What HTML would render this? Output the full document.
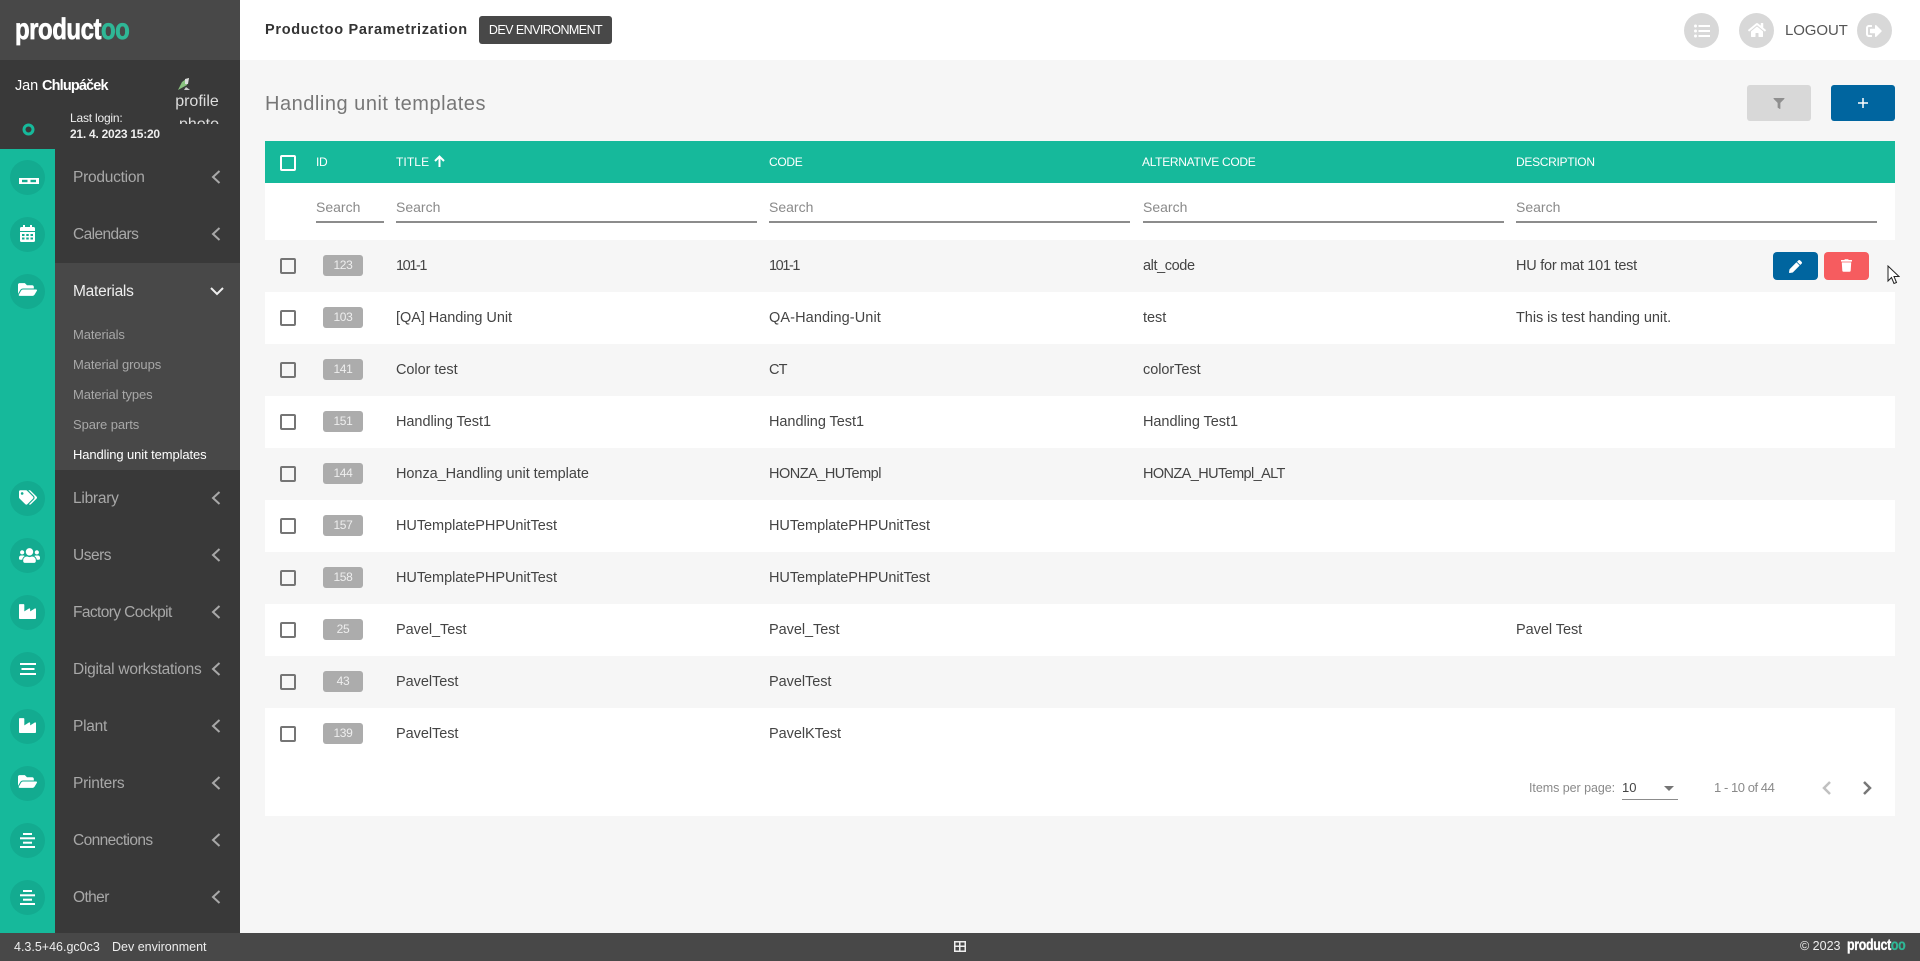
<!DOCTYPE html>
<html lang="en">
<head>
<meta charset="utf-8">
<title>Handling unit templates</title>
<style>
html,body{margin:0;padding:0;width:1920px;height:961px;overflow:hidden;background:#f6f6f6;font-family:"Liberation Sans",sans-serif;color:#444}
.a{position:absolute;box-sizing:border-box}
.t{position:absolute;white-space:nowrap;line-height:20px;height:20px}
.m{font-size:15.5px;color:#a8a8a8;left:73px;letter-spacing:-.25px;margin-top:1px}
.s{font-size:13px;color:#a8a8a8;left:73px;letter-spacing:-.1px;margin-top:1px}
.h{font-size:12px;color:#fff;top:152px;letter-spacing:-.3px}
.q{font-size:14px;color:#8a8a8a;top:197px}
.d{font-size:14.5px;color:#444;letter-spacing:-.05px;margin-top:1px}
.n1{letter-spacing:-1.4px}
.n2{letter-spacing:-.5px}
.u{position:absolute;height:1.5px;background:#8c8c8c;top:221px}
.c{position:absolute;left:280px;width:16px;height:16px;border:2px solid #757575;border-radius:2px;box-sizing:border-box}
.b{position:absolute;left:323px;width:40px;height:21px;background:#acacac;border-radius:3px;color:#eee;font-size:12px;letter-spacing:-.3px;line-height:21px;text-align:center}
.o{position:absolute;left:10px;width:35px;height:35px;border-radius:50%;background:#13ab90}
.o svg{position:absolute;fill:#fff}
.r{position:absolute;width:35px;height:35px;border-radius:50%;background:#d8d8d8;top:13px}
.r svg{position:absolute;fill:#fff}
.row{position:absolute;left:265px;width:1630px;height:52px}
svg.ch{position:absolute;left:211px;fill:none;stroke:#a8a8a8;stroke-width:2}
.logo{transform-origin:0 50%;font-weight:bold;color:#fff}
.logo span{color:#2fb796}
</style>
</head>
<body>
<svg width="0" height="0" style="position:absolute">
<defs>
<symbol id="folder" viewBox="0 0 576 512"><path d="M572.694 292.093L500.27 416.248A63.997 63.997 0 0 1 444.989 448H45.025c-18.523 0-30.064-20.093-20.731-36.093l72.424-124.155A64 64 0 0 1 152 256h399.964c18.523 0 30.064 20.093 20.73 36.093zM152 224h328v-48c0-26.51-21.49-48-48-48H272l-64-64H48C21.49 64 0 85.49 0 112v278.046l69.077-118.418C86.214 242.25 117.989 224 152 224z"/></symbol>
<symbol id="industry" viewBox="0 0 512 512"><path d="M475.115 163.781L336 252.309v-68.28c0-18.916-20.931-30.399-36.885-20.248L160 252.309V56c0-13.255-10.745-24-24-24H24C10.745 32 0 42.745 0 56v400c0 13.255 10.745 24 24 24h464c13.255 0 24-10.745 24-24V184.029c0-18.917-20.931-30.399-36.885-20.248z"/></symbol>
<symbol id="users" viewBox="0 0 640 512"><path d="M96 224c35.3 0 64-28.7 64-64s-28.7-64-64-64-64 28.7-64 64 28.7 64 64 64zm448 0c35.3 0 64-28.7 64-64s-28.7-64-64-64-64 28.7-64 64 28.7 64 64 64zm32 32h-64c-17.6 0-33.5 7.1-45.1 18.6 40.3 22.1 68.9 62 75.1 109.4h66c17.7 0 32-14.3 32-32v-32c0-35.3-28.7-64-64-64zm-256 0c61.9 0 112-50.1 112-112S381.9 32 320 32 208 82.1 208 144s50.1 112 112 112zm76.8 32h-8.3c-20.8 10-43.9 16-68.5 16s-47.6-6-68.5-16h-8.3C179.6 288 128 339.6 128 403.2V432c0 26.5 21.5 48 48 48h288c26.5 0 48-21.5 48-48v-28.8c0-63.6-51.6-115.2-115.2-115.2zm-223.7-13.4C161.5 263.1 145.6 256 128 256H64c-35.3 0-64 28.7-64 64v32c0 17.7 14.3 32 32 32h65.9c6.3-47.4 34.9-87.3 75.2-109.4z"/></symbol>
<symbol id="tags" viewBox="0 0 640 512"><path d="M497.941 225.941L286.059 14.059A48 48 0 0 0 252.118 0H48C21.49 0 0 21.49 0 48v204.118a48 48 0 0 0 14.059 33.941l211.882 211.882c18.744 18.745 49.136 18.746 67.882 0l204.118-204.118c18.745-18.745 18.745-49.137 0-67.882zM112 160c-26.51 0-48-21.49-48-48s21.49-48 48-48 48 21.49 48 48-21.49 48-48 48zm513.941 133.823L421.823 497.941c-18.745 18.745-49.137 18.745-67.882 0l-.36-.36L527.64 323.522c16.999-16.999 26.36-39.6 26.36-63.64s-9.362-46.641-26.36-63.64L331.397 0h48.721a48 48 0 0 1 33.941 14.059l211.882 211.882c18.745 18.745 18.745 49.137 0 67.882z"/></symbol>
<symbol id="alignc" viewBox="0 0 15 15"><rect x="3" y="0" width="9" height="2"/><rect x="0" y="4.300" width="15" height="2"/><rect x="3" y="8.700" width="9" height="2"/><rect x="0" y="13" width="15" height="2"/></symbol>
<symbol id="bars" viewBox="0 0 16 12"><rect x="0" y="0" width="16" height="2"/><rect x="1.500" y="5" width="13" height="2"/><rect x="0" y="10" width="16" height="2"/></symbol>
<symbol id="chl" viewBox="0 0 10 14"><path d="M8.500 1L2 7l6.500 6"/></symbol>
</defs>
</svg>

<!-- Header -->
<div class="a" style="left:240px;top:0;width:1680px;height:60px;background:#fff"></div>
<div class="t" style="left:265px;top:20px;font-size:14.5px;font-weight:bold;color:#333;letter-spacing:.7px">Productoo Parametrization</div>
<div class="a" style="left:479px;top:16px;width:133px;height:28px;background:#484848;border-radius:3px;color:#fff;font-size:12.5px;line-height:28px;text-align:center;letter-spacing:-.55px">DEV ENVIRONMENT</div>

<div class="r" style="left:1684px"><svg style="left:10px;top:10.500px" width="16" height="14" viewBox="0 0 16 14"><circle cx="1.500" cy="2" r="1.500"/><circle cx="1.500" cy="7" r="1.500"/><circle cx="1.500" cy="12" r="1.500"/><rect x="4.500" y="1" width="11.500" height="2"/><rect x="4.500" y="6" width="11.500" height="2"/><rect x="4.500" y="11" width="11.500" height="2"/></svg></div>
<div class="r" style="left:1739px"><svg style="left:8.500px;top:9px" width="18" height="16" viewBox="0 0 576 512"><path d="M280.37 148.26L96 300.11V464a16 16 0 0 0 16 16l112.06-.29a16 16 0 0 0 15.92-16V368a16 16 0 0 1 16-16h64a16 16 0 0 1 16 16v95.64a16 16 0 0 0 16 16.05L464 480a16 16 0 0 0 16-16V300L295.67 148.26a12.19 12.19 0 0 0-15.3 0zM571.6 251.47L488 182.56V44.05a12 12 0 0 0-12-12h-56a12 12 0 0 0-12 12v72.61L318.47 43a48 48 0 0 0-61 0L4.34 251.47a12 12 0 0 0-1.6 16.9l25.5 31A12 12 0 0 0 45.15 301l235.22-193.74a12.19 12.19 0 0 1 15.3 0L530.9 301a12 12 0 0 0 16.9-1.6l25.5-31a12 12 0 0 0-1.7-16.93z"/></svg></div>
<div class="t" style="left:1785px;top:21px;font-size:15px;color:#555;letter-spacing:-.1px">LOGOUT</div>
<div class="r" style="left:1857px"><svg style="left:9px;top:9.500px" width="16" height="16" viewBox="0 0 512 512"><path d="M497 273L329 441c-15 15-41 4.500-41-17v-96H152c-13.300 0-24-10.700-24-24v-96c0-13.300 10.700-24 24-24h136V88c0-21.400 25.900-32 41-17l168 168c9.300 9.400 9.300 24.600 0 34zM192 436v-40c0-6.600-5.400-12-12-12H96c-17.700 0-32-14.300-32-32V160c0-17.700 14.300-32 32-32h84c6.600 0 12-5.400 12-12V76c0-6.600-5.400-12-12-12H96c-53 0-96 43-96 96v192c0 53 43 96 96 96h84c6.600 0 12-5.400 12-12z"/></svg></div>

<!-- Page title & buttons -->
<div class="t" style="left:265px;top:94px;font-size:20px;color:#777;letter-spacing:.52px">Handling unit templates</div>
<div class="a" style="left:1747px;top:85px;width:64px;height:36px;background:#d8d8d8;border-radius:3px"><svg style="position:absolute;left:26px;top:13px;fill:#8f8f8f" width="12" height="11" viewBox="0 0 512 512"><path d="M487.976 0H24.028C2.710 0-8.047 25.866 7.058 40.971L192 225.941V432c0 7.831 3.821 15.170 10.237 19.662l80 55.980C298.020 518.690 320 507.493 320 487.980V225.941l184.947-184.970C520.021 25.896 509.338 0 487.976 0z"/></svg></div>
<div class="a" style="left:1831px;top:85px;width:64px;height:36px;background:#00659f;border-radius:3px"><svg style="position:absolute;left:27px;top:13px;fill:#fff" width="10" height="10" viewBox="0 0 10 10"><rect x="4.250" y="0" width="1.500" height="10"/><rect x="0" y="4.250" width="10" height="1.500"/></svg></div>

<!-- Table header -->
<div class="a" style="left:265px;top:141px;width:1630px;height:42px;background:#16b99b"></div>
<div class="c" style="top:155px;border-color:#fff"></div>
<div class="t h" style="left:316px">ID</div>
<div class="t h" style="left:396px;letter-spacing:.1px">TITLE</div>
<svg style="position:absolute;left:434px;top:155px;fill:none;stroke:#fff;stroke-width:2" width="11" height="12" viewBox="0 0 11 12"><path d="M5.500 12V1.500M1 6l4.500-4.500L10 6"/></svg>
<div class="t h" style="left:769px">CODE</div>
<div class="t h" style="left:1142px">ALTERNATIVE CODE</div>
<div class="t h" style="left:1516px">DESCRIPTION</div>

<!-- Search row -->
<div class="a" style="left:265px;top:183px;width:1630px;height:57px;background:#fff"></div>
<div class="t q" style="left:316px">Search</div><div class="u" style="left:316px;width:68px"></div>
<div class="t q" style="left:396px">Search</div><div class="u" style="left:396px;width:361px"></div>
<div class="t q" style="left:769px">Search</div><div class="u" style="left:769px;width:361px"></div>
<div class="t q" style="left:1143px">Search</div><div class="u" style="left:1143px;width:361px"></div>
<div class="t q" style="left:1516px">Search</div><div class="u" style="left:1516px;width:361px"></div>

<!-- Rows -->
<div class="row" style="top:292px;background:#fff"></div>
<div class="row" style="top:396px;background:#fff"></div>
<div class="row" style="top:500px;background:#fff"></div>
<div class="row" style="top:604px;background:#fff"></div>
<div class="row" style="top:708px;background:#fff;height:108px"></div>

<div class="c" style="top:258px"></div><div class="b" style="top:255px">123</div>
<div class="t d n1" style="left:396px;top:255px">101-1</div><div class="t d n1" style="left:769px;top:255px">101-1</div><div class="t d" style="left:1143px;top:255px;letter-spacing:-.4px">alt_code</div><div class="t d" style="left:1516px;top:255px;letter-spacing:-.25px">HU for mat 101 test</div>
<div class="a" style="left:1773px;top:252px;width:45px;height:28px;background:#00659f;border-radius:4px"><svg style="position:absolute;left:16px;top:8px;fill:#fff" width="13" height="13" viewBox="0 0 512 512"><path d="M497.900 142.100l-46.100 46.100c-4.700 4.700-12.300 4.700-17 0l-111-111c-4.700-4.700-4.700-12.300 0-17l46.100-46.100c18.700-18.700 49.100-18.700 67.900 0l60.100 60.100c18.800 18.700 18.800 49.100 0 67.900zM284.200 99.800L21.600 362.400.4 483.900c-2.900 16.400 11.400 30.600 27.800 27.800l121.500-21.300 262.600-262.600c4.700-4.700 4.700-12.300 0-17l-111-111c-4.800-4.700-12.400-4.700-17.100 0z"/></svg></div>
<div class="a" style="left:1824px;top:252px;width:45px;height:28px;background:#f65c5f;border-radius:4px"><svg style="position:absolute;left:17px;top:7px;fill:#fff" width="11" height="13" viewBox="0 0 448 512"><path d="M432 32H312l-9.400-18.700A24 24 0 0 0 281.100 0H166.800a23.720 23.720 0 0 0-21.400 13.300L136 32H16A16 16 0 0 0 0 48v32a16 16 0 0 0 16 16h416a16 16 0 0 0 16-16V48a16 16 0 0 0-16-16zM53.200 467a48 48 0 0 0 47.900 45h245.800a48 48 0 0 0 47.900-45L416 128H32z"/></svg></div>
<svg style="position:absolute;left:1887px;top:265px" width="13" height="20" viewBox="0 0 13 20"><path d="M1 1v15l3.500-3.500 2.500 6 2.500-1-2.500-6h5z" fill="#fff" stroke="#222" stroke-width="1"/></svg>

<div class="c" style="top:310px"></div><div class="b" style="top:307px">103</div>
<div class="t d" style="left:396px;top:307px">[QA] Handing Unit</div><div class="t d" style="left:769px;top:307px;letter-spacing:.1px">QA-Handing-Unit</div><div class="t d" style="left:1143px;top:307px">test</div><div class="t d" style="left:1516px;top:307px">This is test handing unit.</div>

<div class="c" style="top:362px"></div><div class="b" style="top:359px">141</div>
<div class="t d" style="left:396px;top:359px">Color test</div><div class="t d" style="left:769px;top:359px;letter-spacing:-.8px">CT</div><div class="t d" style="left:1143px;top:359px">colorTest</div>

<div class="c" style="top:414px"></div><div class="b" style="top:411px">151</div>
<div class="t d" style="left:396px;top:411px">Handling Test1</div><div class="t d" style="left:769px;top:411px">Handling Test1</div><div class="t d" style="left:1143px;top:411px">Handling Test1</div>

<div class="c" style="top:466px"></div><div class="b" style="top:463px">144</div>
<div class="t d" style="left:396px;top:463px">Honza_Handling unit template</div><div class="t d n2" style="left:769px;top:463px">HONZA_HUTempl</div><div class="t d n2" style="left:1143px;top:463px;letter-spacing:-.6px">HONZA_HUTempl_ALT</div>

<div class="c" style="top:518px"></div><div class="b" style="top:515px">157</div>
<div class="t d" style="left:396px;top:515px">HUTemplatePHPUnitTest</div><div class="t d" style="left:769px;top:515px">HUTemplatePHPUnitTest</div>

<div class="c" style="top:570px"></div><div class="b" style="top:567px">158</div>
<div class="t d" style="left:396px;top:567px">HUTemplatePHPUnitTest</div><div class="t d" style="left:769px;top:567px">HUTemplatePHPUnitTest</div>

<div class="c" style="top:622px"></div><div class="b" style="top:619px">25</div>
<div class="t d" style="left:396px;top:619px">Pavel_Test</div><div class="t d" style="left:769px;top:619px">Pavel_Test</div><div class="t d" style="left:1516px;top:619px">Pavel Test</div>

<div class="c" style="top:674px"></div><div class="b" style="top:671px">43</div>
<div class="t d" style="left:396px;top:671px">PavelTest</div><div class="t d" style="left:769px;top:671px">PavelTest</div>

<div class="c" style="top:726px"></div><div class="b" style="top:723px">139</div>
<div class="t d" style="left:396px;top:723px">PavelTest</div><div class="t d" style="left:769px;top:723px">PavelKTest</div>

<!-- Pagination -->
<div class="t" style="left:1529px;top:778px;font-size:12.500px;color:#8a8a8a;letter-spacing:-.05px">Items per page:</div>
<div class="t" style="left:1622px;top:778px;font-size:13px;color:#444">10</div>
<div class="a" style="left:1622px;top:799px;width:56px;height:1px;background:#8c8c8c"></div>
<svg style="position:absolute;left:1664px;top:786px;fill:#757575" width="10" height="5"><path d="M0 0h10L5 5z"/></svg>
<div class="t" style="left:1714px;top:778px;font-size:13px;color:#8a8a8a;letter-spacing:-.45px">1 - 10 of 44</div>
<svg style="position:absolute;left:1822px;top:781px;fill:none;stroke:#c0c0c0;stroke-width:2.500" width="10" height="14"><path d="M8 1L2 7l6 6"/></svg>
<svg style="position:absolute;left:1862px;top:781px;fill:none;stroke:#777;stroke-width:2.500" width="10" height="14"><path d="M2 1l6 6-6 6"/></svg>

<!-- Sidebar -->
<div class="a" style="left:0;top:0;width:240px;height:60px;background:#484848"></div>
<div class="t logo" style="left:15px;top:10px;height:40px;line-height:40px;font-size:30px;letter-spacing:-.6px;transform:scaleX(.8);-webkit-text-stroke:.7px">product<span>oo</span></div>
<div class="a" style="left:0;top:60px;width:240px;height:873px;background:#393939"></div>
<div class="a" style="left:0;top:149px;width:55px;height:784px;background:#16b99b"></div>
<div class="a" style="left:55px;top:263px;width:185px;height:207px;background:#484848"></div>

<div class="t" style="left:15px;top:76px;font-size:14.500px;color:#fff;letter-spacing:-.1px">Jan <b style="letter-spacing:-.85px">Chlupáček</b></div>
<svg style="position:absolute;left:21.500px;top:122.500px;fill:none;stroke:#16b99b;stroke-width:3" width="13" height="13"><circle cx="6.500" cy="6.500" r="4.500"/></svg>
<div class="t" style="left:70px;top:108px;font-size:12px;color:#eee;letter-spacing:-.2px">Last login:</div>
<div class="t" style="left:70px;top:124px;font-size:12px;font-weight:bold;color:#eee;letter-spacing:-.25px">21. 4. 2023 15:20</div>
<svg style="position:absolute;left:177px;top:78px" width="14" height="13" viewBox="0 0 14 13"><path d="M1 12L5 4 9 1l3-1-2 7z" fill="#8ac27f"/><path d="M8 1l4-1-1 6H8z" fill="#ddd"/><path d="M9 9l4 3H7z" fill="#ccc"/></svg>
<div class="a" style="left:170px;top:90px;width:56px;height:34px;overflow:hidden;color:#ddd;font-size:16px;line-height:23px;text-align:center"><span style="display:block;margin-left:-2px">profile</span><span style="display:block;margin-left:2px">photo</span></div>

<!-- Menu -->
<div class="o" style="top:160px"><svg style="left:9px;top:18px" width="20" height="6" viewBox="0 0 20 6"><rect width="20" height="1.800"/><rect y="4.200" width="20" height="1.800"/><rect x="0" width="3" height="6"/><rect x="8.500" width="3" height="6"/><rect x="17" width="3" height="6"/></svg></div>
<div class="t m" style="top:167px">Production</div>
<svg class="ch" style="top:170px" width="10" height="14"><use href="#chl"/></svg>

<div class="o" style="top:217px"><svg style="left:10px;top:8px" width="15" height="17" viewBox="0 0 15 17"><path fill-rule="evenodd" d="M3 0h2v2h5V0h2v2h1.500A1.500 1.500 0 0 1 15 3.500V6H0V3.500A1.500 1.500 0 0 1 1.500 2H3zM0 7h15v8.500a1.500 1.500 0 0 1-1.500 1.500h-12A1.500 1.500 0 0 1 0 15.500zM2 9v2h2.500V9zm4.250 0v2h2.500V9zm4.250 0v2H13V9zM2 12.500v2h2.500v-2zm4.250 0v2h2.500v-2zm4.250 0v2H13v-2z"/></svg></div>
<div class="t m" style="top:224px;letter-spacing:-.6px">Calendars</div>
<svg class="ch" style="top:227px" width="10" height="14"><use href="#chl"/></svg>

<div class="o" style="top:274px"><svg style="left:8px;top:7px" width="19" height="17"><use href="#folder"/></svg></div>
<div class="t m" style="top:281px;color:#eee">Materials</div>
<svg style="position:absolute;left:210px;top:287px;fill:none;stroke:#eee;stroke-width:2" width="14" height="9"><path d="M1 1l6 6 6-6"/></svg>

<div class="t s" style="top:324px">Materials</div>
<div class="t s" style="top:354px">Material groups</div>
<div class="t s" style="top:384px">Material types</div>
<div class="t s" style="top:414px">Spare parts</div>
<div class="t s" style="top:444px;color:#fff">Handling unit templates</div>

<div class="o" style="top:481px"><svg style="left:9px;top:9px" width="18" height="15"><use href="#tags"/></svg></div>
<div class="t m" style="top:488px">Library</div>
<svg class="ch" style="top:491px" width="10" height="14"><use href="#chl"/></svg>

<div class="o" style="top:538px"><svg style="left:9px;top:9px" width="21" height="17"><use href="#users"/></svg></div>
<div class="t m" style="top:545px;letter-spacing:-.5px">Users</div>
<svg class="ch" style="top:548px" width="10" height="14"><use href="#chl"/></svg>

<div class="o" style="top:595px"><svg style="left:9px;top:8px" width="17" height="17"><use href="#industry"/></svg></div>
<div class="t m" style="top:602px;letter-spacing:-.6px">Factory Cockpit</div>
<svg class="ch" style="top:605px" width="10" height="14"><use href="#chl"/></svg>

<div class="o" style="top:652px"><svg style="left:9.500px;top:11px" width="16" height="12"><use href="#bars"/></svg></div>
<div class="t m" style="top:659px">Digital workstations</div>
<svg class="ch" style="top:662px" width="10" height="14"><use href="#chl"/></svg>

<div class="o" style="top:709px"><svg style="left:9px;top:8px" width="17" height="17"><use href="#industry"/></svg></div>
<div class="t m" style="top:716px">Plant</div>
<svg class="ch" style="top:719px" width="10" height="14"><use href="#chl"/></svg>

<div class="o" style="top:766px"><svg style="left:8px;top:7px" width="19" height="17"><use href="#folder"/></svg></div>
<div class="t m" style="top:773px">Printers</div>
<svg class="ch" style="top:776px" width="10" height="14"><use href="#chl"/></svg>

<div class="o" style="top:823px"><svg style="left:10px;top:10px" width="15" height="15"><use href="#alignc"/></svg></div>
<div class="t m" style="top:830px;letter-spacing:-.6px">Connections</div>
<svg class="ch" style="top:833px" width="10" height="14"><use href="#chl"/></svg>

<div class="o" style="top:880px"><svg style="left:10px;top:10px" width="15" height="15"><use href="#alignc"/></svg></div>
<div class="t m" style="top:887px;letter-spacing:-.6px">Other</div>
<svg class="ch" style="top:890px" width="10" height="14"><use href="#chl"/></svg>

<!-- Footer -->
<div class="a" style="left:0;top:933px;width:1920px;height:28px;background:#484848"></div>
<div class="t" style="left:14px;top:937px;font-size:12.500px;color:#eee;letter-spacing:0">4.3.5+46.gc0c3</div>
<div class="t" style="left:112px;top:937px;font-size:12.500px;color:#eee;letter-spacing:0">Dev environment</div>
<svg style="position:absolute;left:954px;top:941px;fill:#eee" width="12" height="11" viewBox="0 0 12 11"><path fill-rule="evenodd" d="M0 0h12v11H0zM1.500 1.500v3h3.500v-3zm5 0v3h4v-3zm-5 4.500v3.500h3.500V6zm5 0v3.500h4V6z"/></svg>
<div class="t" style="left:1800px;top:936px;font-size:12.500px;color:#eee">© 2023</div>
<div class="t logo" style="left:1847px;top:936px;font-size:15.500px;letter-spacing:-.4px;transform:scaleX(.8);-webkit-text-stroke:.3px">product<span>oo</span></div>
</body>
</html>
